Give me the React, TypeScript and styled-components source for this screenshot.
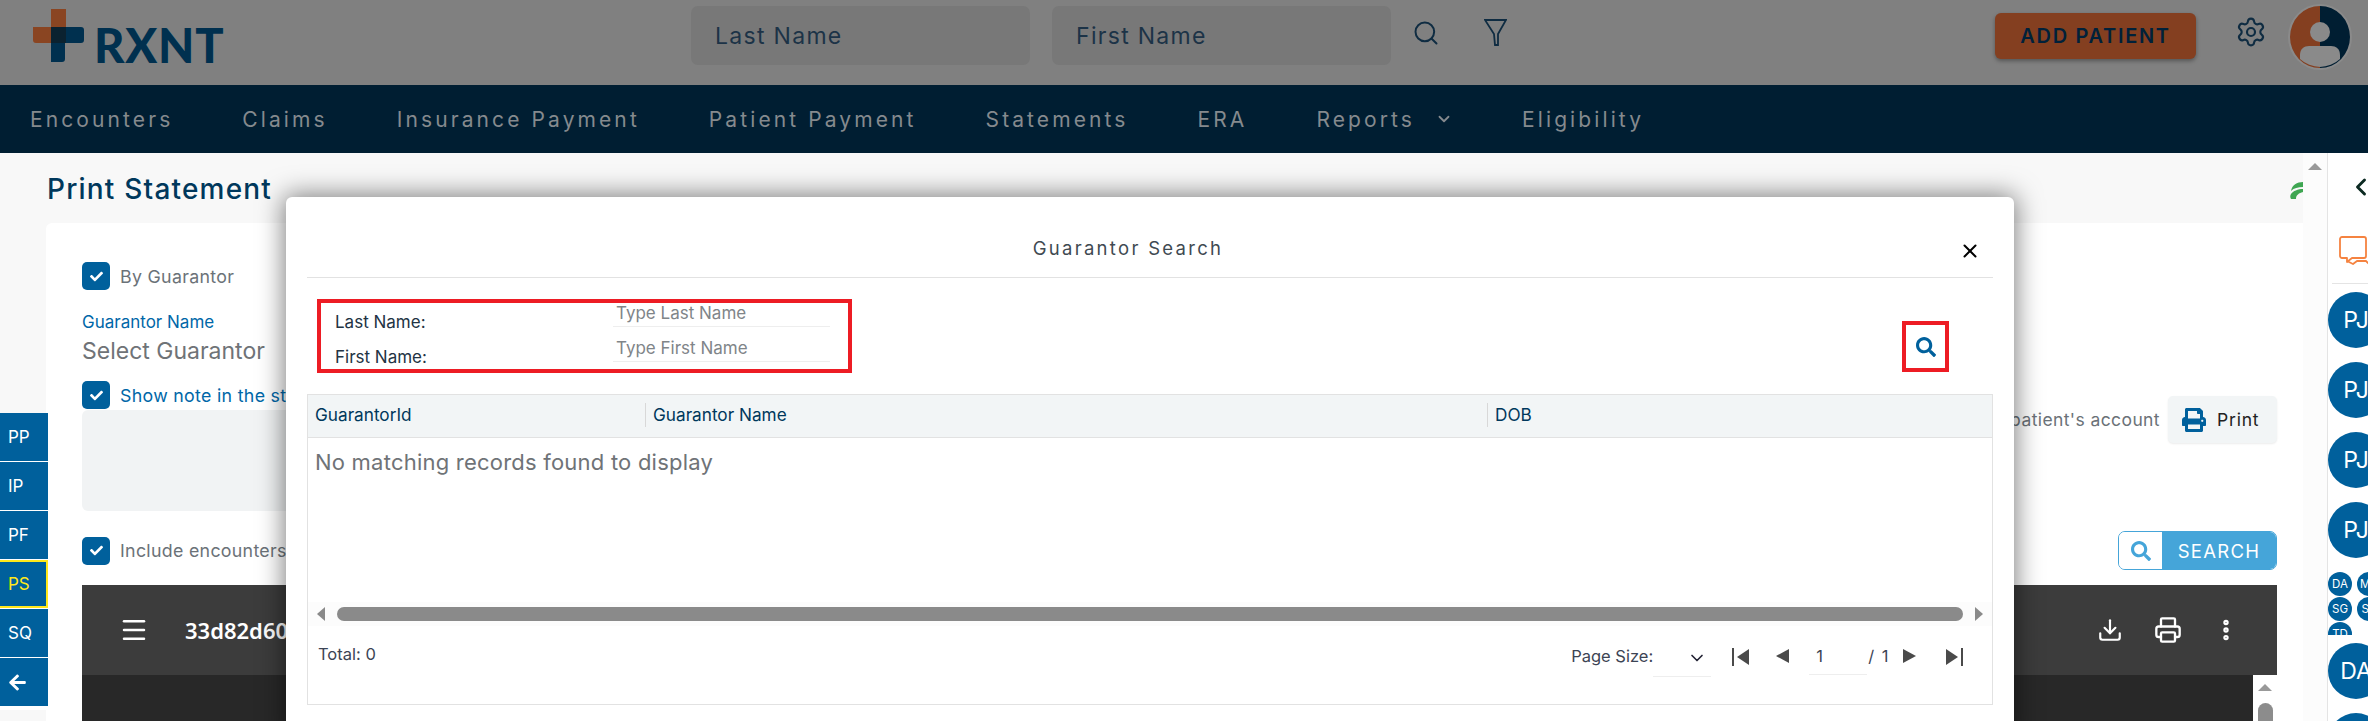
import * as React from "react";
import styled, { createGlobalStyle } from "styled-components";
import { Search, Settings, ChevronDown, ChevronLeft, X, Download, Printer, EllipsisVertical, Menu } from "lucide-react";
import { FaSearch, FaPrint, FaArrowLeft, FaCheck } from "react-icons/fa";

const FONT = `"Inter", "Noto Sans", sans-serif`;

const Global = createGlobalStyle`
  html, body { margin: 0; padding: 0; background: #fff; }
  * { box-sizing: border-box; }
  body { font-family: ${FONT}; overflow: hidden; }
  input::placeholder { opacity: 1; color: inherit; }
`;

const Page = styled.div`
  position: relative;
  width: 2368px;
  height: 721px;
  overflow: hidden;
  display: flex;
  flex-direction: column;
`;

/* top bar, already dimmed by the modal backdrop */
const TopBar = styled.header`
  height: 85px;
  flex: none;
  background: #808080;
  display: flex;
  align-items: flex-start;
  padding-left: 32px;
`;

const LogoWrap = styled.div`
  display: flex;
  align-items: flex-start;
  width: 659px;
  padding-top: 9px;
  gap: 9px;
`;

const LogoText = styled.span`
  font-family: "Lato", sans-serif;
  font-weight: 900;
  font-size: 47px;
  line-height: 53px;
  letter-spacing: 0.8px;
  color: #00304f;
  margin-top: 10px;
`;

const HeadInput = styled.input`
  width: 339px;
  height: 59px;
  margin-top: 6px;
  margin-right: 22px;
  background: #787878;
  border: none;
  border-radius: 7px;
  padding: 0 0 0 24px;
  font: 400 23px ${FONT};
  letter-spacing: 1.3px;
  color: #1c3347;
  outline: none;
`;

const HeadIcons = styled.div`
  display: flex;
  gap: 44px;
  padding-top: 19px;
  margin-left: -1px;
  color: #0f2c42;
`;

const AddPatient = styled.button`
  margin-left: 488px;
  margin-top: 13px;
  width: 201px;
  height: 46px;
  border: none;
  border-radius: 6px;
  background: #843f20;
  color: #00213a;
  font: 600 20px ${FONT};
  letter-spacing: 1.7px;
  box-shadow: 0 2px 4px rgba(0, 0, 0, 0.35);
`;

const GearSlot = styled.div`
  margin-left: 39px;
  margin-top: 16px;
  color: #0f2c42;
`;

const AvatarSlot = styled.div`
  margin-left: 20px;
  margin-top: 3px;
`;

const NavBar = styled.nav`
  height: 68px;
  flex: none;
  background: #001e32;
  display: flex;
  align-items: center;
  padding-left: 30px;
  gap: 69px;
`;

const NavItem = styled.span`
  display: flex;
  align-items: center;
  gap: 20px;
  font-size: 21px;
  letter-spacing: 3.1px;
  color: #858a8e;
  white-space: nowrap;
`;

const Body = styled.div`
  flex: 1;
  min-height: 0;
  display: flex;
`;

const Content = styled.main`
  flex: 1;
  min-width: 0;
  background: #f8f8f8;
  overflow: hidden;
`;

const TitleRow = styled.div`
  height: 70px;
  padding: 21px 0 0 47px;
  display: flex;
  justify-content: space-between;
  align-items: flex-start;
`;

const Title = styled.h1`
  margin: 0;
  font-size: 28px;
  line-height: 30px;
  font-weight: 500;
  letter-spacing: 1.2px;
  color: #00385c;
`;

const Leaf = styled.svg`
  margin: 8px 0 0 0;
`;

const Card = styled.section`
  margin-left: 46px;
  background: #fff;
  border-radius: 6px 0 0 0;
  padding: 39px 26px 0 36px;
  height: 500px;
`;

const CheckRow = styled.div`
  display: flex;
  align-items: center;
  gap: 10px;
  height: 28px;
  font-size: 17.8px;
  letter-spacing: 0.3px;
  color: ${(p: { $blue?: boolean }) => (p.$blue ? "#0067a8" : "#6b7278")};
`;

const CheckBox = styled.span`
  width: 28px;
  height: 28px;
  flex: none;
  border-radius: 5px;
  background: #00609c;
  color: #fff;
  display: flex;
  align-items: center;
  justify-content: center;
  font-size: 13px;
`;

const FieldLabel = styled.div`
  margin-top: 22px;
  font-size: 17px;
  line-height: 20px;
  color: #0067a8;
`;

const FieldValue = styled.div`
  margin-top: 4px;
  font-size: 23px;
  line-height: 30px;
  color: #6f7377;
`;

const NoteHead = styled.div`
  margin-top: 15px;
  display: flex;
  justify-content: space-between;
  align-items: flex-start;
  height: 29px;
`;

const NoteRight = styled.div`
  display: flex;
  align-items: center;
  gap: 8px;
  font-size: 17.5px;
  letter-spacing: 0.4px;
  color: #6b7278;
  margin-top: 15px;
`;

const PrintBtn = styled.button`
  width: 109px;
  height: 47px;
  border: none;
  border-radius: 5px;
  background: #f2f5f6;
  display: flex;
  align-items: center;
  gap: 11px;
  padding-left: 14px;
  font: 400 17.5px ${FONT};
  letter-spacing: 0.8px;
  color: #222;
  box-shadow: 0 1px 2px rgba(0, 0, 0, 0.08);
  svg { color: #00609c; }
`;

const NoteArea = styled.div`
  width: 1100px;
  height: 101px;
  background: #f1f3f4;
  border-radius: 6px;
`;

const IncludeRow = styled.div`
  margin-top: 20px;
  display: flex;
  justify-content: space-between;
  align-items: center;
  height: 39px;
`;

const SearchBtn = styled.div`
  width: 159px;
  height: 39px;
  display: flex;
  border-radius: 7px;
  overflow: hidden;
  border: 1px solid #45a5d9;
`;

const SearchIconPart = styled.span`
  width: 43px;
  background: #fff;
  color: #45a5d9;
  display: flex;
  align-items: center;
  justify-content: center;
  font-size: 20px;
`;

const SearchLabel = styled.span`
  flex: 1;
  background: #45a5d9;
  color: #fff;
  display: flex;
  align-items: center;
  justify-content: center;
  font-size: 18.5px;
  letter-spacing: 1.3px;
`;

const Viewer = styled.div`
  margin-top: 15px;
  height: 200px;
  background: #282828;
  position: relative;
`;

const ViewerBar = styled.div`
  height: 90px;
  background: #3c3c3c;
  display: flex;
  align-items: center;
  padding: 0 38px 0 37px;
  color: #fff;
`;

const ViewerName = styled.span`
  margin-left: 36px;
  font: 600 22px "Noto Sans", sans-serif;
  flex: 1;
`;

const ViewerTools = styled.div`
  display: flex;
  align-items: center;
  gap: 31px;
`;

const ViewerScroll = styled.div`
  position: absolute;
  right: 0;
  top: 90px;
  bottom: 0;
  width: 24px;
  background: #fff;
  display: flex;
  flex-direction: column;
  align-items: center;
  padding-top: 9px;
`;

const ArrowUp = styled.span`
  width: 0;
  height: 0;
  border-left: 7px solid transparent;
  border-right: 7px solid transparent;
  border-bottom: 7px solid #999;
`;

const ViewerThumb = styled.span`
  margin-top: 12px;
  width: 15px;
  flex: 1;
  background: #8c8c8c;
  border-radius: 8px 8px 0 0;
`;

const PageScroll = styled.div`
  width: 24px;
  flex: none;
  background: #fcfcfc;
  display: flex;
  justify-content: center;
  padding-top: 10px;
`;

const Sidebar = styled.aside`
  width: 41px;
  flex: none;
  border-left: 1px solid #e4e4e4;
  background: #fff;
  overflow: hidden;
  display: flex;
  flex-direction: column;
  align-items: flex-start;
`;

const SideChevron = styled.div`
  height: 83px;
  flex: none;
  padding: 20px 0 0 19px;
  color: #0c2a22;
`;

const ChatSlot = styled.div`
  height: 47px;
  flex: none;
  width: 100%;
  padding-left: 11px;
`;

const SideRule = styled.div`
  width: 100%;
  flex: none;
  margin-left: 4px;
  border-top: 1px solid #e4e4e4;
  height: 9px;
`;

const Bubble = styled.div<{ $small?: boolean }>`
  flex: none;
  border-radius: 50%;
  background: #00609c;
  color: #fff;
  display: flex;
  align-items: center;
  justify-content: center;
  width: ${(p) => (p.$small ? "24px" : "56px")};
  height: ${(p) => (p.$small ? "24px" : "56px")};
  font-size: ${(p) => (p.$small ? "11.5px" : "23px")};
  margin-bottom: ${(p) => (p.$small ? "1px" : "14px")};
`;

const TinyGrid = styled.div`
  height: 63px;
  margin: 0 0 8px;
  overflow: hidden;
  display: grid;
  grid-template-columns: 24px 24px;
  column-gap: 5px;
  align-content: start;
  width: 60px;
  flex: none;
`;

/* floating tab strip on the left edge */
const SideTabs = styled.div`
  position: absolute;
  left: 0;
  top: 413px;
  width: 61px;
  padding-right: 13px;
  padding-bottom: 3px;
  background: rgba(255, 255, 255, 0.9);
`;

const Tab = styled.div<{ $active?: boolean }>`
  height: 48px;
  margin-bottom: 1px;
  background: #00609c;
  color: ${(p) => (p.$active ? "#ffe81a" : "#fff")};
  border: ${(p) => (p.$active ? "2px solid #ffe81a" : "none")};
  border-left: none;
  display: flex;
  align-items: center;
  padding-left: 8px;
  font-size: 17px;
`;

/* modal */
const Modal = styled.div`
  position: absolute;
  left: 286px;
  top: 197px;
  width: 1728px;
  height: 540px;
  background: #fff;
  border-radius: 6px 6px 0 0;
  box-shadow: 0 0 26px 2px rgba(0, 0, 0, 0.5);
  padding: 0 21px;
`;

const ModalHead = styled.div`
  position: relative;
  height: 81px;
  border-bottom: 1px solid #e2e2e2;
  display: flex;
  align-items: center;
  justify-content: center;
  padding: 42px 44px 21px 0;
  font-size: 18.5px;
  letter-spacing: 2.3px;
  color: #3f4a52;
`;

const CloseBtn = styled.span`
  position: absolute;
  right: 12px;
  top: 43px;
  color: #000;
  display: flex;
`;

const FilterRow = styled.div`
  height: 116px;
  padding: 21px 44px 0 10px;
  display: flex;
  justify-content: space-between;
  align-items: flex-start;
`;

const RedBox = styled.div`
  width: 535px;
  height: 74px;
  border: 4px solid #ed1c24;
  padding-left: 14px;
`;

const FilterLine = styled.div<{ $height: number }>`
  height: ${(p) => p.$height}px;
  display: grid;
  grid-template-columns: 278px 217px;
`;

const FilterLabel = styled.span`
  font-size: 17px;
  line-height: 20px;
  padding-top: 9px;
  color: #223344;
`;

const FilterInput = styled.input`
  height: 24px;
  border: none;
  border-bottom: 1px solid #eeeeee;
  padding: 0 0 3px 3px;
  font: 400 17px ${FONT};
  color: #808589;
  outline: none;
  background: transparent;
`;

const RedSearch = styled.div`
  width: 47px;
  height: 51px;
  margin-top: 22px;
  border: 4px solid #ed1c24;
  color: #00609c;
  display: flex;
  align-items: center;
  justify-content: center;
  font-size: 20px;
`;

const Frame = styled.div`
  height: 311px;
  border: 1px solid #e2e2e2;
  display: flex;
  flex-direction: column;
`;

const TableHead = styled.div`
  height: 43px;
  flex: none;
  background: #f2f5f6;
  border-bottom: 1px solid #e2e2e2;
  display: grid;
  grid-template-columns: 337px 842px 1fr;
  align-items: center;
  padding-bottom: 2px;
`;

const HeadCell = styled.div<{ $first?: boolean }>`
  height: 24px;
  line-height: 24px;
  padding-left: 7px;
  border-left: ${(p) => (p.$first ? "none" : "1px solid #d8d8d8")};
  font-size: 17.2px;
  color: #00385c;
`;

const EmptyText = styled.div`
  flex: 1;
  padding: 10px 0 0 7px;
  font-size: 22px;
  line-height: 28px;
  letter-spacing: 0.22px;
  color: #6f7377;
`;

const HScroll = styled.div`
  height: 24px;
  flex: none;
  background: #fcfcfc;
  display: flex;
  align-items: center;
  padding: 0 9px;
  gap: 12px;
`;

const HThumb = styled.span`
  flex: 1;
  height: 14px;
  border-radius: 7px;
  background: #8a8a8a;
`;

const TriLeft = styled.span`
  border-top: 7px solid transparent;
  border-bottom: 7px solid transparent;
  border-right: 8px solid #8a8a8a;
`;

const TriRight = styled.span`
  border-top: 7px solid transparent;
  border-bottom: 7px solid transparent;
  border-left: 8px solid #8a8a8a;
`;

const FootRow = styled.div`
  height: 78px;
  flex: none;
  display: flex;
  justify-content: space-between;
  padding: 18px 29px 0 10px;
  align-items: flex-start;
  font-size: 16.5px;
  color: #3c4454;
`;

const Pager = styled.div`
  display: flex;
  align-items: flex-start;
  height: 34px;
`;

const PagerText = styled.span`
  line-height: 24px;
  white-space: nowrap;
`;

const PageCount = styled(PagerText)`
  letter-spacing: 1.5px;
`;

const PageSelect = styled.div`
  width: 58px;
  height: 33px;
  border-bottom: 1px solid #eeeeee;
  display: flex;
  justify-content: flex-end;
  padding: 4px 4px 0 0;
`;

const PageInput = styled.div`
  width: 58px;
  height: 31px;
  margin: 0 1px 0 20px;
  padding: 2px 0 0 7px;
  border-bottom: 1px solid #eeeeee;
`;

const PagerIcon = styled.svg<{ $gap: number }>`
  margin-left: ${(p) => p.$gap}px;
  margin-top: 4px;
  flex: none;
`;

const navLabels = ["Encounters", "Claims", "Insurance Payment", "Patient Payment", "Statements", "ERA"];
const tabs = ["PP", "IP", "PF", "PS", "SQ"];

const Logo = () => (
  <svg width="53" height="53" viewBox="0 0 53 53">
    <path d="M19 0h15v18H19zM1 18h33v16H4a3 3 0 0 1-3-3z" fill="#8a4522" />
    <path d="M19 18h30a3 3 0 0 1 3 3v10a3 3 0 0 1-3 3H33v16a3 3 0 0 1-3 3H19z" fill="#00304f" />
    <path d="M19 18h15v16H19z" fill="#0b2230" />
  </svg>
);

const Funnel = () => (
  <svg width="23" height="27" viewBox="0 0 23 27" fill="none" stroke="#0f2c42" strokeWidth="1.8">
    <path d="M1 1h21l-8 14v11h-3l-1-11z" />
  </svg>
);

const Avatar = () => (
  <svg width="66" height="68" viewBox="0 0 66 68">
    <ellipse cx="33" cy="34" rx="32" ry="33" fill="#8a8a8a" />
    <path d="M33 3a30 31 0 0 0 0 62z" fill="#843f20" />
    <path d="M33 3a30 31 0 0 1 0 62z" fill="#001e32" />
    <circle cx="33" cy="29" r="10" fill="#8a8a8a" />
    <path d="M13 52c0-6 4-9 9-9h22c5 0 9 3 9 9v4a30 31 0 0 1-40 0z" fill="#8a8a8a" />
  </svg>
);

const ChatIcon = () => (
  <svg width="36" height="32" viewBox="0 0 36 32" fill="none" stroke="#f58340" strokeWidth="1.8" strokeLinejoin="round">
    <path d="M3 1h22a2 2 0 0 1 2 2v17a2 2 0 0 1-2 2H13l-5 4v-4H3a2 2 0 0 1-2-2V3a2 2 0 0 1 2-2z" />
    <path d="M8 25l6 3 4-3h9l6 6v-7" />
  </svg>
);

const App = () => (
  <Page>
    <Global />
    <TopBar>
      <LogoWrap>
        <Logo />
        <LogoText>RXNT</LogoText>
      </LogoWrap>
      <HeadInput placeholder="Last Name" readOnly />
      <HeadInput placeholder="First Name" readOnly />
      <HeadIcons>
        <Search size={28} strokeWidth={1.7} />
        <Funnel />
      </HeadIcons>
      <AddPatient>ADD PATIENT</AddPatient>
      <GearSlot>
        <Settings size={32} strokeWidth={1.6} />
      </GearSlot>
      <AvatarSlot>
        <Avatar />
      </AvatarSlot>
    </TopBar>
    <NavBar>
      {navLabels.map((label) => (
        <NavItem key={label}>{label}</NavItem>
      ))}
      <NavItem>
        Reports <ChevronDown size={18} strokeWidth={2.4} />
      </NavItem>
      <NavItem>Eligibility</NavItem>
    </NavBar>
    <Body>
      <Content>
        <TitleRow>
          <Title>Print Statement</Title>
          <Leaf width="14" height="17" viewBox="0 0 14 17">
            <path d="M14 0C8 0 3 3 2 9c3-3 7-4 12-4z" fill="#3fa652" />
            <path d="M14 7C9 7 4 9 2 12c-1 2-1 3 0 5h5c0-4 3-6 7-7z" fill="#3fa652" />
          </Leaf>
        </TitleRow>
        <Card>
          <CheckRow>
            <CheckBox><FaCheck /></CheckBox>
            By Guarantor
          </CheckRow>
          <FieldLabel>Guarantor Name</FieldLabel>
          <FieldValue>Select Guarantor</FieldValue>
          <NoteHead>
            <CheckRow $blue>
              <CheckBox><FaCheck /></CheckBox>
              Show note in the statement
            </CheckRow>
            <NoteRight>
              Add note to patient's account
              <PrintBtn>
                <FaPrint size={24} />
                Print
              </PrintBtn>
            </NoteRight>
          </NoteHead>
          <NoteArea />
          <IncludeRow>
            <CheckRow>
              <CheckBox><FaCheck /></CheckBox>
              Include encounters
            </CheckRow>
            <SearchBtn>
              <SearchIconPart><FaSearch /></SearchIconPart>
              <SearchLabel>SEARCH</SearchLabel>
            </SearchBtn>
          </IncludeRow>
          <Viewer>
            <ViewerBar>
              <Menu size={30} strokeWidth={2} />
              <ViewerName>33d82d60</ViewerName>
              <ViewerTools>
                <Download size={26} strokeWidth={2} />
                <Printer size={28} strokeWidth={2} />
                <EllipsisVertical size={26} strokeWidth={3} />
              </ViewerTools>
            </ViewerBar>
            <ViewerScroll>
              <ArrowUp />
              <ViewerThumb />
            </ViewerScroll>
          </Viewer>
        </Card>
      </Content>
      <PageScroll>
        <ArrowUp />
      </PageScroll>
      <Sidebar>
        <SideChevron>
          <ChevronLeft size={28} strokeWidth={2.5} />
        </SideChevron>
        <ChatSlot>
          <ChatIcon />
        </ChatSlot>
        <SideRule />
        <Bubble>PJ</Bubble>
        <Bubble>PJ</Bubble>
        <Bubble>PJ</Bubble>
        <Bubble>PJ</Bubble>
        <TinyGrid>
          <Bubble $small>DA</Bubble>
          <Bubble $small>MS</Bubble>
          <Bubble $small>SG</Bubble>
          <Bubble $small>SK</Bubble>
          <Bubble $small>TD</Bubble>
        </TinyGrid>
        <Bubble>DA</Bubble>
        <Bubble>PJ</Bubble>
      </Sidebar>
    </Body>

    <SideTabs>
      {tabs.map((t) => (
        <Tab key={t} $active={t === "PS"}>{t}</Tab>
      ))}
      <Tab><FaArrowLeft size={19} /></Tab>
    </SideTabs>

    <Modal>
      <ModalHead>
        Guarantor Search
        <CloseBtn><X size={22} strokeWidth={2.2} /></CloseBtn>
      </ModalHead>
      <FilterRow>
        <RedBox>
          <FilterLine $height={35}>
            <FilterLabel>Last Name:</FilterLabel>
            <FilterInput placeholder="Type Last Name" readOnly />
          </FilterLine>
          <FilterLine $height={31}>
            <FilterLabel>First Name:</FilterLabel>
            <FilterInput placeholder="Type First Name" readOnly />
          </FilterLine>
        </RedBox>
        <RedSearch><FaSearch /></RedSearch>
      </FilterRow>
      <Frame>
        <TableHead>
          <HeadCell $first>GuarantorId</HeadCell>
          <HeadCell>Guarantor Name</HeadCell>
          <HeadCell>DOB</HeadCell>
        </TableHead>
        <EmptyText>No matching records found to display</EmptyText>
        <HScroll>
          <TriLeft />
          <HThumb />
          <TriRight />
        </HScroll>
        <FootRow>
          <span>Total: 0</span>
          <Pager>
            <PagerText>Page Size:</PagerText>
            <PageSelect><ChevronDown size={20} strokeWidth={2} color="#223" /></PageSelect>
            <PagerIcon $gap={21} width="17" height="18" viewBox="0 0 17 18" fill="#4a4a4a">
              <path d="M0 0h2v18H0zM17 1v16L5 9z" />
            </PagerIcon>
            <PagerIcon $gap={27} width="13" height="16" viewBox="0 0 13 16" fill="#4a4a4a">
              <path d="M13 1v14L0 8z" />
            </PagerIcon>
            <PageInput>1</PageInput>
            <PageCount>/ 1</PageCount>
            <PagerIcon $gap={13} width="13" height="16" viewBox="0 0 13 16" fill="#4a4a4a">
              <path d="M0 1v14l13-7z" />
            </PagerIcon>
            <PagerIcon $gap={30} width="17" height="18" viewBox="0 0 17 18" fill="#4a4a4a">
              <path d="M15 0h2v18h-2zM0 1v16l12-8z" />
            </PagerIcon>
          </Pager>
        </FootRow>
      </Frame>
    </Modal>
  </Page>
);

export default App;
